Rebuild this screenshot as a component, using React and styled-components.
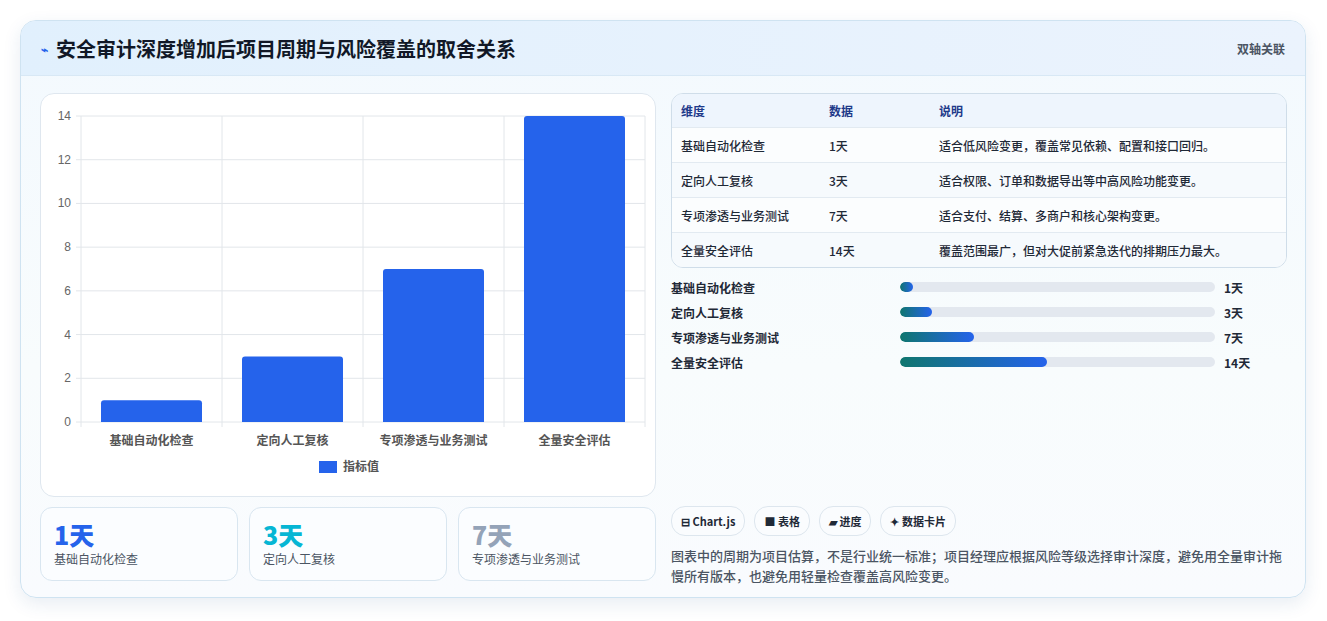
import React from "react";
import styled, { createGlobalStyle } from "styled-components";

const G = createGlobalStyle`
  body{margin:0;background:#fff;font-family:"Noto Sans CJK SC","Noto Sans",sans-serif;}
`;
const Page = styled.div`padding:20px 21px 21px 20px;`;
const Card = styled.div`
  border:1px solid #cfe3f1;border-radius:16px;overflow:hidden;
  background:linear-gradient(180deg,#f3f9fe,#f8fcfd 60%,#f9fbfe);
  box-shadow:0 6px 18px rgba(30,80,140,.10);height:578px;box-sizing:border-box;
`;
const Header = styled.div`
  height:55px;display:flex;align-items:center;justify-content:space-between;padding:0 20px;
  background:linear-gradient(90deg,#e1f0fd,#ebf3fd);border-bottom:1px solid #d8e8f5;box-sizing:border-box;
`;
const Title = styled.h1`margin:0;font-size:20px;font-weight:700;color:#111827;display:flex;align-items:center;gap:8px;`;
const Tag = styled.span`font-size:12px;color:#4b5563;font-weight:600;`;
const Body = styled.div`display:grid;grid-template-columns:616px 616px;gap:15px;padding:17px 19px 0 19px;`;
const Col = styled.div`display:flex;flex-direction:column;`;
const ChartBox = styled.div`background:#fff;border:1px solid #dfe7ef;border-radius:14px;height:404px;box-sizing:border-box;`;
const Stats = styled.div`display:grid;grid-template-columns:repeat(3,198px);gap:11px;margin-top:10px;`;
const Stat = styled.div`border:1px solid #d9e6f0;border-radius:12px;background:#fbfdff;height:74px;box-sizing:border-box;padding:10px 13px;`;
const Big = styled.div`font-size:25px;font-weight:800;color:${p=>p.c};line-height:32px;`;
const Small = styled.div`font-size:12px;color:#4b5563;`;
const Table = styled.div`border:1px solid #cfdde9;border-radius:12px;overflow:hidden;background:#fbfdff;`;
const Row = styled.div`display:grid;grid-template-columns:148px 110px 1fr;height:${p=>p.h?33:34}px;align-items:center;padding:0 9px;font-size:12px;color:${p=>p.h?"#1e3a8a":"#1f2937"};font-weight:${p=>p.h?700:500};background:${p=>p.h?"#eef5fd":p.alt?"#f6fafd":"#fbfdfe"};border-top:${p=>p.first?"none":"1px solid #e2eaf1"};`;
const Bars = styled.div`display:flex;flex-direction:column;gap:7px;margin-top:10px;`;
const BarRow = styled.div`display:grid;grid-template-columns:220px 315px auto;gap:9px;align-items:center;font-size:12px;font-weight:600;color:#1f2937;height:18px;`;
const Track = styled.div`height:10px;border-radius:5px;background:#e3e8ef;overflow:hidden;`;
const Fill = styled.div`height:100%;border-radius:5px;background:linear-gradient(90deg,#0f766e,#2563eb);`;
const Chips = styled.div`display:flex;gap:9px;margin-top:135px;`;
const Chip = styled.div`height:28px;padding:0 9px;border:1px solid #dde6ee;border-radius:14px;background:#fafcfe;font-size:11px;font-weight:700;color:#1f2937;display:flex;align-items:center;gap:3px;`;
const Note = styled.p`margin:10px 0 0;font-size:13px;line-height:20px;color:#4b5563;font-weight:500;`;

const data=[["基础自动化检查",1,"适合低风险变更，覆盖常见依赖、配置和接口回归。"],["定向人工复核",3,"适合权限、订单和数据导出等中高风险功能变更。"],["专项渗透与业务测试",7,"适合支付、结算、多商户和核心架构变更。"],["全量安全评估",14,"覆盖范围最广，但对大促前紧急迭代的排期压力最大。"]];

function Chart(){
  const x0=40,x1=604,y0=328,top=22,h=y0-top;const cw=(x1-x0)/4;
  return <svg width="616" height="402" style={{display:"block"}} fontFamily="Noto Sans CJK SC,sans-serif">
    {[0,2,4,6,8,10,12,14].map(v=>{const y=y0-v/14*h;return <g key={v}><line x1={x0-5} x2={x1} y1={y} y2={y} stroke="#e2e6ea"/><text x={x0-10} y={y+4} fontSize="12" fontFamily="Liberation Sans,sans-serif" fill="#666" textAnchor="end">{v}</text></g>})}
    {[0,1,2,3,4].map(i=><line key={i} x1={x0+i*cw} x2={x0+i*cw} y1={top} y2={y0+5} stroke="#e2e6ea"/>)}
    {data.map((d,i)=>{const bh=d[1]/14*h;return <g key={i}><path d={`M${x0+i*cw+20},${y0} V${y0-bh+3} q0,-3 3,-3 h95 q3,0 3,3 V${y0}Z`} fill="#2563eb"/><text x={x0+i*cw+cw/2} y={y0+23} fontSize="12" fill="#555" textAnchor="middle" fontWeight="600">{d[0]}</text></g>})}
    <rect x="278" y="367" width="18" height="12" fill="#2563eb"/>
    <text x="302" y="377" fontSize="12" fill="#555" fontWeight="600">指标值</text>
  </svg>;
}

export default function App(){
  return <Page><G/><Card>
    <Header><Title><span style={{color:"#2563eb",fontSize:12}}>⌁</span>安全审计深度增加后项目周期与风险覆盖的取舍关系</Title><Tag>双轴关联</Tag></Header>
    <Body>
      <Col>
        <ChartBox><Chart/></ChartBox>
        <Stats>
          <Stat><Big c="#2563eb">1天</Big><Small>基础自动化检查</Small></Stat>
          <Stat><Big c="#06b6d4">3天</Big><Small>定向人工复核</Small></Stat>
          <Stat><Big c="#94a3b8">7天</Big><Small>专项渗透与业务测试</Small></Stat>
        </Stats>
      </Col>
      <Col>
        <Table>
          <Row h first><span>维度</span><span>数据</span><span>说明</span></Row>
          {data.map((d,i)=><Row key={i} alt={i%2===1}><span>{d[0]}</span><span>{d[1]}天</span><span>{d[2]}</span></Row>)}
        </Table>
        <Bars>{data.map((d,i)=><BarRow key={i}><span>{d[0]}</span><Track><Fill style={{width:`${Math.max(d[1]/30*100,4)}%`}}/></Track><span>{d[1]}天</span></BarRow>)}</Bars>
        <Chips><Chip>⊟ Chart.js</Chip><Chip>■ 表格</Chip><Chip>▰ 进度</Chip><Chip>✦ 数据卡片</Chip></Chips>
        <Note>图表中的周期为项目估算，不是行业统一标准；项目经理应根据风险等级选择审计深度，避免用全量审计拖慢所有版本，也避免用轻量检查覆盖高风险变更。</Note>
      </Col>
    </Body>
  </Card></Page>;
}
